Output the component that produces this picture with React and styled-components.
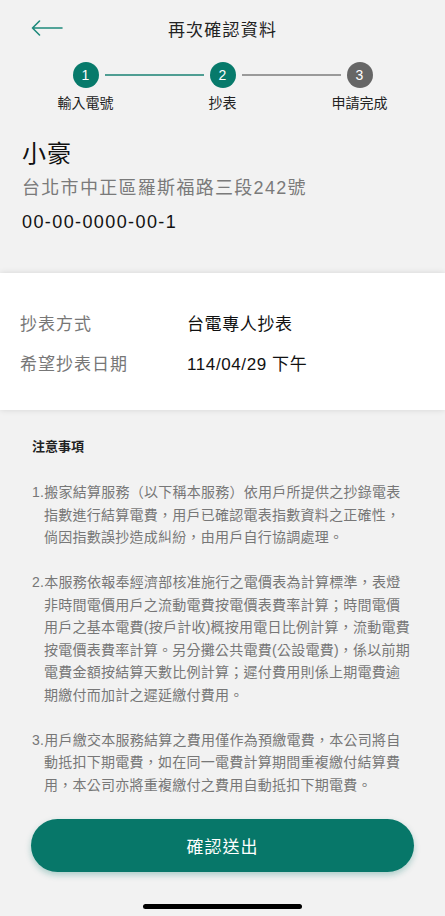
import styled, { createGlobalStyle } from 'styled-components';

const GlobalStyle = createGlobalStyle`
  body {
    margin: 0;
    background-color: #f2f2f2;
    font-family: "Liberation Sans", "Noto Sans CJK TC", sans-serif;
  }
`;

const steps = [
  { no: 1, label: '輸入電號', done: true, left: null, right: '#4f9e93' },
  { no: 2, label: '抄表', done: true, left: '#4f9e93', right: '#9a9a9a' },
  { no: 3, label: '申請完成', done: false, left: '#9a9a9a', right: null },
];

const notes = [
  [
    '1.搬家結算服務（以下稱本服務）依用戶所提供之抄錄電表',
    '指數進行結算電費，用戶已確認電表指數資料之正確性，',
    '倘因指數誤抄造成糾紛，由用戶自行協調處理。',
  ],
  [
    '2.本服務依報奉經濟部核准施行之電價表為計算標準，表燈',
    '非時間電價用戶之流動電費按電價表費率計算；時間電價',
    '用戶之基本電費(按戶計收)概按用電日比例計算，流動電費',
    '按電價表費率計算。另分攤公共電費(公設電費)，係以前期',
    '電費金額按結算天數比例計算；遲付費用則係上期電費逾',
    '期繳付而加計之遲延繳付費用。',
  ],
  [
    '3.用戶繳交本服務結算之費用僅作為預繳電費，本公司將自',
    '動抵扣下期電費，如在同一電費計算期間重複繳付結算費',
    '用，本公司亦將重複繳付之費用自動抵扣下期電費。',
  ],
];

export default function App() {
  return (
    <>
      <GlobalStyle />
      <PageStyle>
        <HeaderStyle>
          <BackButton aria-label="返回">
            <svg width="32" height="16" viewBox="0 0 32 16" fill="none">
              <path d="M31 8H1.5M8.5 1L1.5 8l7 7" stroke="#1f8a7c" strokeWidth="1.6" strokeLinecap="round" strokeLinejoin="round" />
            </svg>
          </BackButton>
          <h1>再次確認資料</h1>
        </HeaderStyle>

        <StepperStyle>
          {steps.map((step) => (
            <StepStyle key={step.no}>
              <div className="track">
                <Connector $color={step.left} />
                <StepCircle $done={step.done}>{step.no}</StepCircle>
                <Connector $color={step.right} />
              </div>
              <span>{step.label}</span>
            </StepStyle>
          ))}
        </StepperStyle>

        <AccountStyle>
          <h2>小豪</h2>
          <p className="address">台北市中正區羅斯福路三段242號</p>
          <p className="number">00-00-0000-00-1</p>
        </AccountStyle>

        <InfoCardStyle>
          <InfoRow>
            <dt>抄表方式</dt>
            <dd>台電專人抄表</dd>
          </InfoRow>
          <InfoRow>
            <dt>希望抄表日期</dt>
            <dd>114/04/29 下午</dd>
          </InfoRow>
        </InfoCardStyle>

        <NoticeStyle>
          <h3>注意事項</h3>
          {notes.map((lines, index) => (
            <NoteItem key={index}>
              {lines.map((line, i) => (
                <div key={i} className={i === 0 ? 'first' : ''}>{line}</div>
              ))}
            </NoteItem>
          ))}
        </NoticeStyle>

        <SubmitButton>確認送出</SubmitButton>

        <HomeIndicator />
      </PageStyle>
    </>
  );
}

const PageStyle = styled.div`
  width: 445px;
  min-height: 916px;
  display: flex;
  flex-direction: column;
  background-color: #f2f2f2;
  color: #1a1a1a;
`;

const HeaderStyle = styled.header`
  height: 56px;
  display: flex;
  align-items: center;
  justify-content: center;
  position: relative;

  h1 {
    margin: 0;
    font-size: 17px;
    font-weight: 400;
    color: #222;
    letter-spacing: 1.2px;
  }
`;

const BackButton = styled.button`
  position: absolute;
  left: 31px;
  top: 20px;
  padding: 0;
  border: none;
  background: none;
  display: flex;
  cursor: pointer;
`;

const StepperStyle = styled.div`
  display: grid;
  grid-template-columns: repeat(3, 137px);
  padding: 6px 17px 0;
`;

const StepStyle = styled.div`
  display: flex;
  flex-direction: column;
  align-items: center;

  .track {
    width: 100%;
    height: 26px;
    display: flex;
    align-items: center;
  }

  span {
    margin-top: 5px;
    font-size: 14px;
    line-height: 20px;
    color: #222;
  }
`;

const Connector = styled.div`
  flex: 1;
  height: 2px;
  background-color: ${({ $color }) => $color || 'transparent'};
  &:first-child { margin-right: 6px; }
  &:last-child { margin-left: 6px; }
`;

const StepCircle = styled.div`
  width: 26px;
  height: 26px;
  border-radius: 50%;
  flex-shrink: 0;
  display: flex;
  align-items: center;
  justify-content: center;
  font-size: 14px;
  color: #fff;
  background-color: ${({ $done }) => ($done ? '#077a6b' : '#666666')};
`;

const AccountStyle = styled.section`
  padding: 24px 22px 0;
  height: 160px;
  box-sizing: border-box;

  h2 {
    margin: 0;
    font-size: 24px;
    font-weight: 400;
    line-height: 34px;
    letter-spacing: 1px;
    color: #111;
  }

  p {
    margin: 0;
    line-height: 34px;
    font-size: 18px;
  }

  .address {
    color: #7a7a7a;
    letter-spacing: 1.3px;
  }

  .number {
    color: #111;
    letter-spacing: 1.4px;
  }
`;

const InfoCardStyle = styled.dl`
  margin: 0;
  padding: 29px 20px 28px;
  background-color: #fff;
  box-shadow: 0 0 6px rgba(0, 0, 0, 0.12);
`;

const InfoRow = styled.div`
  display: flex;
  align-items: center;
  height: 40px;
  font-size: 17px;

  dt {
    width: 167px;
    color: #777;
    letter-spacing: 1px;
  }

  dd {
    margin: 0;
    color: #111;
    letter-spacing: 0.6px;
  }
`;

const NoticeStyle = styled.section`
  padding: 27px 30px 0 32px;

  h3 {
    margin: 0 0 24px;
    font-size: 13px;
    font-weight: 700;
    line-height: 20px;
    color: #222;
  }
`;

const NoteItem = styled.div`
  margin-bottom: 22.5px;
  padding-left: 12px;
  font-size: 14px;
  letter-spacing: 0.25px;
  line-height: 22.5px;
  color: #777;
  white-space: nowrap;

  .first {
    margin-left: -12px;
  }
`;

const SubmitButton = styled.button`
  margin: 0 31px;
  height: 53px;
  border: none;
  border-radius: 27px;
  background-color: #077769;
  color: #fff;
  font-family: inherit;
  font-size: 17px;
  letter-spacing: 1px;
  box-shadow: 0 3px 6px rgba(7, 119, 105, 0.3);
  cursor: pointer;
`;

const HomeIndicator = styled.div`
  width: 159px;
  height: 5px;
  margin: 32px auto 8px;
  border-radius: 3px;
  background-color: #000;
`;
